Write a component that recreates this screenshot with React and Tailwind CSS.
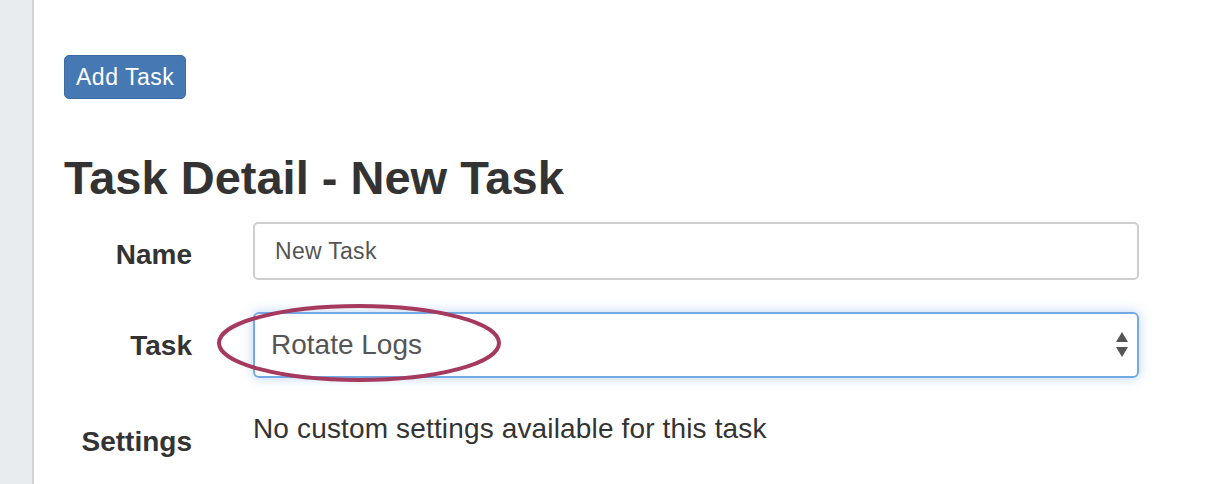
const SelectArrows = () => (
  <svg width="14" height="26" viewBox="0 0 14 26" className="shrink-0">
    <polygon points="7,0 13,10 1,10" fill="#555" />
    <polygon points="1,15 13,15 7,25" fill="#555" />
  </svg>
);

const Row = ({ label, labelPad, className = "", children }) => (
  <div className={`relative flex ${className}`}>
    <div
      className={`w-[128px] shrink-0 text-right font-bold text-[28px] leading-[32px] text-[#333] ${labelPad}`}
    >
      {label}
    </div>
    <div className="ml-[61px] w-[886px]">{children}</div>
  </div>
);

const App = () => {
  return (
    <div
      className="flex w-[1226px] h-[484px] overflow-hidden bg-white"
      style={{ fontFamily: '"Liberation Sans", Arial, sans-serif' }}
    >
      <div className="w-[34px] shrink-0 bg-[#e8ecef] border-r-2 border-[#d1d5d8]" />
      <div className="flex flex-col pl-[30px] pt-[55px]">
        <div>
          <button className="h-[44px] px-[11px] rounded-[5px] bg-[#4679b4] border border-[#3d6ca3] text-white text-[23px] leading-none tracking-[0.5px]">
            Add Task
          </button>
        </div>

        <h1 className="mt-[53px] text-[47px] leading-[52px] font-bold text-[#333]">
          Task Detail - New Task
        </h1>

        <Row label="Name" labelPad="pt-[17px]" className="mt-[18px]">
          <div className="h-[58px] flex items-center rounded-[5px] border-2 border-[#cfcfcf] pl-[20px] text-[23px] text-[#555] tracking-[0.3px]">
            New Task
          </div>
        </Row>

        <Row label="Task" labelPad="pt-[18px]" className="mt-[32px]">
          <div className="h-[66px] flex items-center justify-between rounded-[6px] border-2 border-[#74aae3] shadow-[0_0_12px_rgba(102,160,230,0.45)] pl-[16px] pr-[8px] text-[28px] text-[#555]">
            <span>Rotate Logs</span>
            <SelectArrows />
          </div>
          <svg
            className="absolute left-[150px] top-[-11px] pointer-events-none"
            width="290"
            height="84"
            viewBox="0 0 290 84"
          >
            <ellipse
              cx="145"
              cy="42"
              rx="140"
              ry="37"
              fill="none"
              stroke="#a5395e"
              strokeWidth="4"
            />
          </svg>
        </Row>

        <Row label="Settings" labelPad="pt-[13px]" className="mt-[35px]">
          <div className="text-[28px] leading-[32px] text-[#333] tracking-[0.15px]">
            No custom settings available for this task
          </div>
        </Row>
      </div>
    </div>
  );
};

export default App;
